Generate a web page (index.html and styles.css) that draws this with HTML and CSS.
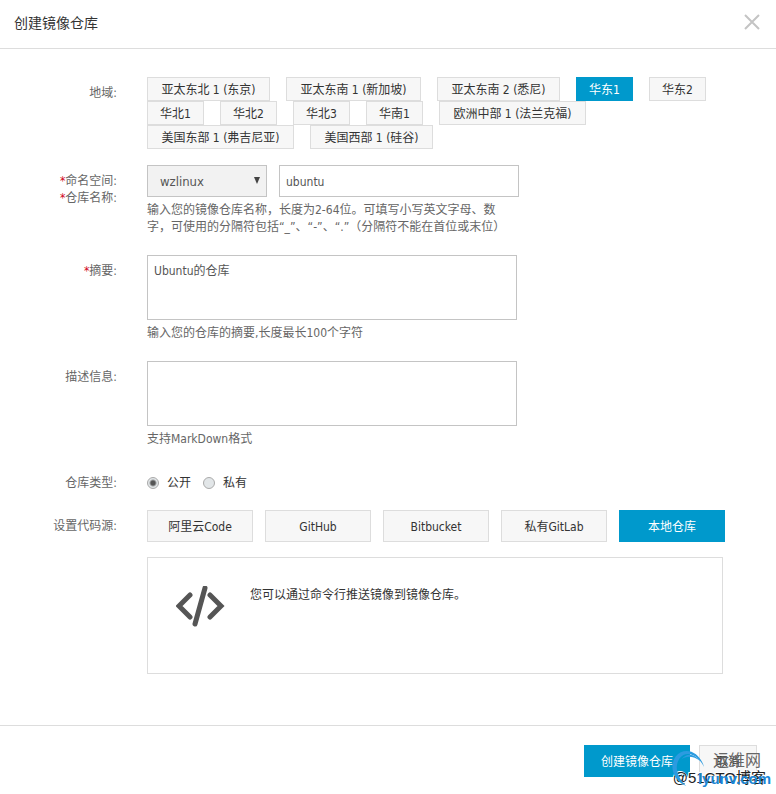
FILE: index.html
```html
<!DOCTYPE html>
<html lang="zh-CN">
<head>
    <meta charset="UTF-8">
    <meta name="viewport" content="width=device-width, initial-scale=1.0">
    <title>创建镜像仓库</title>
    <link rel="stylesheet" href="styles.css">
</head>
<body>
    <form class="dialog">
        <header class="dialog-header">
            <h1 class="title">创建镜像仓库</h1>
            <button type="button" class="close" aria-label="关闭">
                <svg class="close-icon" viewBox="0 0 16 16">
                    <path d="M1 1l14 14M15 1L1 15"></path>
                </svg>
            </button>
        </header>

        <div class="dialog-body">
            <div class="row">
                <div class="label" id="region-label">地域:</div>
                <div class="field regions" role="group" aria-labelledby="region-label">
                    <button type="button" class="option medium">亚太东北 1 (东京)</button>
                    <button type="button" class="option large">亚太东南 1 (新加坡)</button>
                    <button type="button" class="option medium">亚太东南 2 (悉尼)</button>
                    <button type="button" class="option active">华东1</button>
                    <button type="button" class="option">华东2</button>
                    <button type="button" class="option">华北1</button>
                    <button type="button" class="option">华北2</button>
                    <button type="button" class="option">华北3</button>
                    <button type="button" class="option">华南1</button>
                    <button type="button" class="option wide">欧洲中部 1 (法兰克福)</button>
                    <button type="button" class="option wide">美国东部 1 (弗吉尼亚)</button>
                    <button type="button" class="option medium">美国西部 1 (硅谷)</button>
                </div>
            </div>

            <div class="row name-row">
                <div class="label">
                    <label for="namespace"><span class="required">*</span>命名空间:</label>
                    <label for="repo"><span class="required">*</span>仓库名称:</label>
                </div>
                <div class="field">
                    <div class="inputs">
                        <div class="select-wrap">
                            <select id="namespace" class="select">
                                <option>wzlinux</option>
                            </select>
                            <svg class="arrow" viewBox="0 0 6 7">
                                <path d="M0 0h6L3 7z"></path>
                            </svg>
                        </div>
                        <input type="text" id="repo" class="input" value="ubuntu">
                    </div>
                    <p class="help">输入您的镜像仓库名称，长度为2-64位。可填写小写英文字母、数字，可使用的分隔符包括“_”、“-”、“.”（分隔符不能在首位或末位）</p>
                </div>
            </div>

            <div class="row">
                <label class="label" for="summary"><span class="required">*</span>摘要:</label>
                <div class="field">
                    <textarea id="summary" class="textarea">Ubuntu的仓库</textarea>
                    <p class="help">输入您的仓库的摘要,长度最长100个字符</p>
                </div>
            </div>

            <div class="row">
                <label class="label" for="detail">描述信息:</label>
                <div class="field">
                    <textarea id="detail" class="textarea"></textarea>
                    <p class="help">支持MarkDown格式</p>
                </div>
            </div>

            <div class="row type-row">
                <div class="label" id="type-label">仓库类型:</div>
                <div class="field radios" role="radiogroup" aria-labelledby="type-label">
                    <label class="radio-label"><input type="radio" name="type" class="radio" checked>公开</label>
                    <label class="radio-label"><input type="radio" name="type" class="radio">私有</label>
                </div>
            </div>

            <div class="row source-row">
                <div class="label" id="source-label">设置代码源:</div>
                <div class="field">
                    <div class="sources" role="group" aria-labelledby="source-label">
                        <button type="button" class="source">阿里云Code</button>
                        <button type="button" class="source">GitHub</button>
                        <button type="button" class="source">Bitbucket</button>
                        <button type="button" class="source">私有GitLab</button>
                        <button type="button" class="source active">本地仓库</button>
                    </div>
                    <div class="panel">
                        <svg class="code-icon" viewBox="0 0 50 42">
                            <path d="M14 9L3 20l11 11M34 9l11 11-11 11"></path>
                            <path d="M29 2L19 38"></path>
                        </svg>
                        <p class="panel-text">您可以通过命令行推送镜像到镜像仓库。</p>
                    </div>
                </div>
            </div>
        </div>

        <footer class="dialog-footer">
            <button type="submit" class="submit">创建镜像仓库</button>
            <button type="button" class="cancel">取消</button>
        </footer>
    </form>

    <div class="watermark">
        <span class="mark-blog">@51CTO博客</span>
        <svg class="mark-swoosh" viewBox="0 0 40 42">
            <path d="M37 20C32 3 16-2 7 9C0 19 4 34 18 40C9 31 5 20 11 11C18 2 30 6 37 20z"></path>
            <path d="M33 14C27 5 18 5 13 12C18 8 26 8 33 14z"></path>
        </svg>
        <span class="mark-name">运维网</span>
        <span class="mark-site">lyunv.com</span>
    </div>
</body>
</html>
```

FILE: styles.css
```css
* {
    margin: 0;
    padding: 0;
    box-sizing: border-box;
}

body {
    font-family: "DejaVu Sans Condensed", "Noto Sans CJK SC", sans-serif;
    font-size: 12px;
    line-height: 17px;
    text-spacing-trim: space-all;
    color: #333;
    background-color: #fff;
}

button,
input,
select,
textarea {
    font: inherit;
    color: inherit;
}

button {
    cursor: pointer;
}

.dialog {
    position: relative;
}

.dialog-header {
    display: flex;
    align-items: center;
    justify-content: space-between;
    height: 49px;
    padding: 0 16px 4px 14px;
    border-bottom: 1px solid #ddd;
}

.title {
    padding-top: 2px;
    font-size: 14px;
    font-weight: 400;
}

.close {
    display: flex;
    background: none;
    border: none;
}

.close-icon {
    width: 16px;
    height: 16px;
    fill: none;
    stroke: #c4c4c4;
    stroke-width: 2;
}

.dialog-body {
    display: flex;
    flex-direction: column;
    gap: 19px;
    padding: 28px 40px 51px 0;
}

.row {
    display: flex;
    gap: 30px;
}

.label {
    display: flex;
    flex-shrink: 0;
    justify-content: flex-end;
    width: 117px;
    padding-top: 8px;
    color: #666;
}

.required {
    color: #d0021b;
}

.field {
    flex: 1;
}

.regions {
    display: flex;
    flex-wrap: wrap;
    column-gap: 16px;
}

.option {
    min-width: 57px;
    height: 24px;
    padding-top: 2px;
    background-color: #f7f7f7;
    border: 1px solid #ddd;
}

.medium {
    min-width: 123px;
}

.large {
    min-width: 135px;
}

.wide {
    min-width: 147px;
}

.option.active,
.source.active {
    color: #fff;
    background-color: #09c;
    border-color: #09c;
}

.name-row {
    margin-top: -3px;
}

.name-row .label {
    flex-direction: column;
    justify-content: flex-start;
    align-items: flex-end;
}

.inputs {
    display: flex;
    gap: 12px;
}

.select-wrap {
    position: relative;
    width: 120px;
}

.select {
    width: 100%;
    height: 32px;
    padding: 0 12px;
    font-size: 13px;
    color: #555;
    background-color: #f2f2f2;
    border: 1px solid #c4c4c4;
    border-radius: 0;
    appearance: none;
}

.arrow {
    position: absolute;
    top: 12px;
    right: 7px;
    width: 6px;
    height: 7px;
    fill: #444;
    pointer-events: none;
}

.input {
    width: 240px;
    height: 32px;
    padding: 2px 6px 0;
    color: #555;
    border: 1px solid #c4c4c4;
}

.textarea {
    display: block;
    width: 370px;
    height: 65px;
    padding: 7px 6px;
    color: #555;
    border: 1px solid #c4c4c4;
    resize: none;
}

.help {
    max-width: 370px;
    margin-top: 5px;
    color: #666;
}

.type-row {
    margin-top: 7px;
}

.type-row .label {
    padding-top: 1px;
}

.radios {
    display: flex;
    gap: 12px;
}

.radio-label {
    display: flex;
    align-items: center;
    gap: 8px;
}

.radio {
    width: 12px;
    height: 12px;
    background-color: #e2e6e8;
    border: 1px solid #aaa;
    border-radius: 50%;
    appearance: none;
}

.radio:checked {
    background-image: radial-gradient(#555 0 2px, transparent 4px);
}

.sources {
    display: flex;
    gap: 12px;
}

.source-row {
    margin-top: -1px;
}

.source {
    width: 106px;
    height: 32px;
    padding-top: 2px;
    background-color: #f7f7f7;
    border: 1px solid #ddd;
}

.panel {
    display: flex;
    gap: 24px;
    max-width: 576px;
    height: 117px;
    margin-top: 15px;
    padding: 28px;
    border: 1px solid #ddd;
}

.panel-text {
    padding-top: 1px;
}

.code-icon {
    width: 50px;
    height: 42px;
    fill: none;
    stroke: #555;
    stroke-width: 5;
    stroke-linecap: round;
}

.dialog-footer {
    display: flex;
    justify-content: flex-end;
    gap: 9px;
    padding: 19px 19px 17px;
    border-top: 1px solid #ddd;
}

.submit,
.cancel {
    height: 32px;
    padding: 2px 16px 0;
    border: 1px solid #ddd;
}

.submit {
    color: #fff;
    background-color: #09c;
    border-color: #09c;
}

.cancel {
    background-color: #f7f7f7;
}

/* site marks printed over the footer corner */
.watermark {
    position: absolute;
    top: 746px;
    right: 4px;
    width: 104px;
    height: 44px;
    pointer-events: none;
}

.mark-blog,
.mark-swoosh,
.mark-name,
.mark-site {
    position: absolute;
    white-space: nowrap;
}

.mark-blog {
    right: 6px;
    bottom: 4px;
    font-family: "Liberation Sans", "Noto Sans CJK SC", sans-serif;
    font-size: 15px;
    color: #222;
    text-shadow: 1px 1px #fff, -1px -1px #fff;
}

.mark-swoosh {
    top: 1px;
    left: 1px;
    width: 38px;
    height: 42px;
    fill: #2b9be0;
}

.mark-name {
    top: 6px;
    right: 11px;
    font-size: 16px;
    color: #666;
}

.mark-site {
    right: 1px;
    bottom: 3px;
    font: bold 15px "Liberation Sans", sans-serif;
    color: #1b87d6;
}
```
